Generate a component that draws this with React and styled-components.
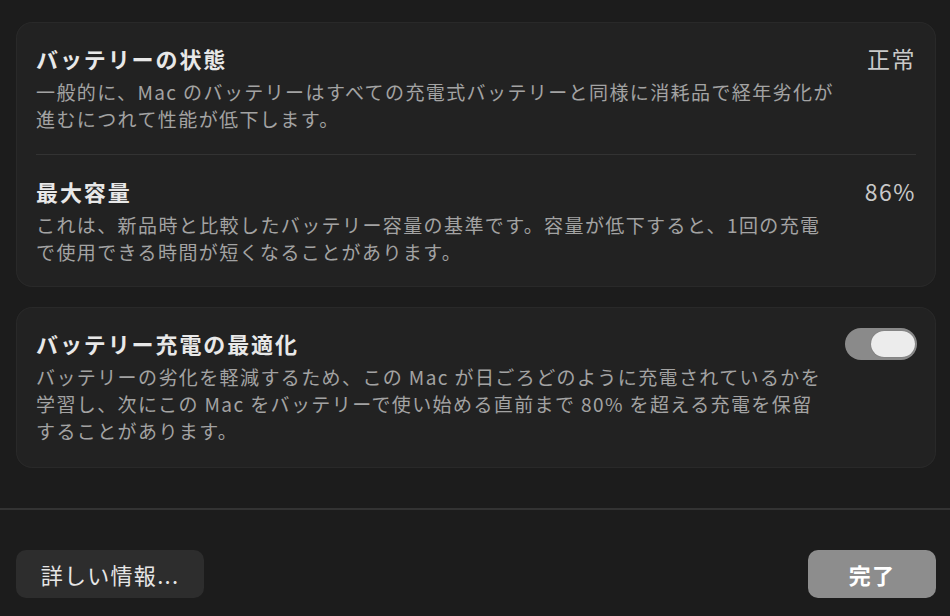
import React from "react";
import styled, { createGlobalStyle } from "styled-components";

const Global = createGlobalStyle`
  html, body { margin: 0; padding: 0; background: #1c1c1c; }
  body {
    font-family: "Noto Sans CJK JP", "Noto Sans", "Liberation Sans", sans-serif;
    -webkit-font-smoothing: antialiased;
  }
`;

const Page = styled.div`
  width: 950px;
  height: 616px;
  background: #1c1c1c;
  display: flex;
  flex-direction: column;
  overflow: hidden;
`;

const Content = styled.div`
  display: flex;
  flex-direction: column;
  gap: 20px;
  padding: 22px 14px 0 16px;
  height: 508px;
  box-sizing: border-box;
  flex-shrink: 0;
`;

const Card = styled.div`
  background: #222222;
  border-radius: 16px;
  box-shadow: inset 0 0 0 1px rgba(255, 255, 255, 0.035);
  display: flex;
  flex-direction: column;
`;

const Section = styled.div`
  display: flex;
  align-items: flex-start;
  gap: 24px;
  padding: ${(p) => (p.$tall ? "22px 20px 24px 20px" : "22px 20px 22px 20px")};
`;

const Divider = styled.div`
  height: 1px;
  margin: 0 20px;
  background: #333333;
`;

const TextCol = styled.div`
  flex: 1;
  display: flex;
  flex-direction: column;
  gap: 6px;
`;

const Title = styled.div`
  font-size: 22px;
  line-height: 28px;
  font-weight: 600;
  letter-spacing: 1.9px;
  color: #e8e8e8;
  white-space: nowrap;
`;

const Desc = styled.div`
  font-size: 19px;
  line-height: 27px;
  letter-spacing: 1.4px;
  color: #a3a3a3;
  white-space: nowrap;
`;

const Value = styled.div`
  font-size: 23px;
  line-height: 28px;
  letter-spacing: 1.5px;
  color: #c9c9c9;
  white-space: nowrap;
`;

const Toggle = styled.div`
  width: 72px;
  height: 32px;
  border-radius: 16px;
  background: #8a8a8a;
  box-sizing: border-box;
  padding: 3px 2px 3px 3px;
  display: flex;
  justify-content: ${(p) => (p.$on ? "flex-end" : "flex-start")};
  margin-top: -1px;
  flex-shrink: 0;
`;

const Knob = styled.div`
  width: 44px;
  height: 26px;
  border-radius: 13px;
  background: #ececec;
  box-shadow: 0 0 1px rgba(0, 0, 0, 0.4);
`;

const Rule = styled.div`
  height: 2px;
  background: #333333;
  flex-shrink: 0;
`;

const Footer = styled.div`
  display: flex;
  justify-content: space-between;
  align-items: center;
  padding: 40px 14px 0 16px;
`;

const Button = styled.button`
  height: 48px;
  width: ${(p) => p.$w}px;
  border: none;
  border-radius: 10px;
  background: ${(p) => (p.$primary ? "#8d8d8d" : "#2d2d2d")};
  color: ${(p) => (p.$primary ? "#ffffff" : "#e6e6e6")};
  font-family: inherit;
  font-size: 22px;
  font-weight: ${(p) => (p.$primary ? 600 : 400)};
  letter-spacing: 1.3px;
  display: flex;
  align-items: center;
  justify-content: center;
  padding: 0;
  cursor: default;
`;

export default function App() {
  return (
    <Page>
      <Global />
      <Content>
        <Card>
          <Section>
            <TextCol>
              <Title>バッテリーの状態</Title>
              <Desc>
                一般的に、Mac のバッテリーはすべての充電式バッテリーと同様に消耗品で経年劣化が
                <br />
                進むにつれて性能が低下します。
              </Desc>
            </TextCol>
            <Value>正常</Value>
          </Section>
          <Divider />
          <Section>
            <TextCol>
              <Title>最大容量</Title>
              <Desc>
                これは、新品時と比較したバッテリー容量の基準です。容量が低下すると、1回の充電
                <br />
                で使用できる時間が短くなることがあります。
              </Desc>
            </TextCol>
            <Value>86%</Value>
          </Section>
        </Card>
        <Card>
          <Section $tall>
            <TextCol>
              <Title>バッテリー充電の最適化</Title>
              <Desc>
                バッテリーの劣化を軽減するため、この Mac が日ごろどのように充電されているかを
                <br />
                学習し、次にこの Mac をバッテリーで使い始める直前まで 80% を超える充電を保留
                <br />
                することがあります。
              </Desc>
            </TextCol>
            <Toggle $on>
              <Knob />
            </Toggle>
          </Section>
        </Card>
      </Content>
      <Rule />
      <Footer>
        <Button $w={188}>詳しい情報...</Button>
        <Button $w={128} $primary>
          完了
        </Button>
      </Footer>
    </Page>
  );
}
